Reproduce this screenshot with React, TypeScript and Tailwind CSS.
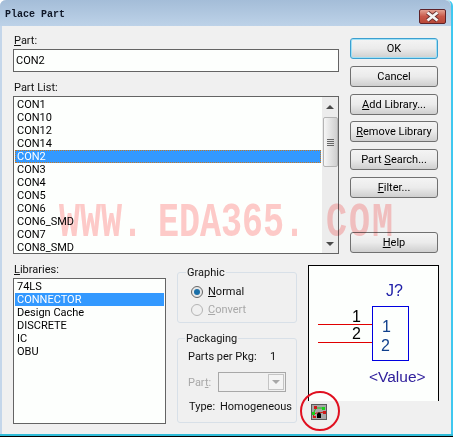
import type { ReactNode } from 'react'

const parts = ['CON1', 'CON10', 'CON12', 'CON14', 'CON2', 'CON3', 'CON4', 'CON5', 'CON6', 'CON6_SMD', 'CON7', 'CON8_SMD']
const libraries = ['74LS', 'CONNECTOR', 'Design Cache', 'DISCRETE', 'IC', 'OBU']

function Btn({ label, u, className = '', primary = false }: { label: string; u?: string; className?: string; primary?: boolean }) {
  const i = u ? label.indexOf(u) : -1
  return (
    <div
      className={`flex h-[21px] w-[88px] items-center justify-center rounded-[3px] border bg-gradient-to-b from-[#f4f4f4] via-[#ebebeb] to-[#cfcfcf] text-black ${
        primary ? 'border-[#3c9fd0] shadow-[inset_0_0_0_1px_#9fe0f5]' : 'border-[#707070]'
      } ${className}`}
    >
      {i >= 0 ? (
        <span>
          {label.slice(0, i)}
          <span className="underline">{u}</span>
          {label.slice(i + 1)}
        </span>
      ) : (
        label
      )}
    </div>
  )
}

function ListBox({ items, selected, focus, className, children }: { items: string[]; selected: string; focus?: boolean; className: string; children?: ReactNode }) {
  return (
    <div className={`flex overflow-hidden border border-[#646464] bg-[#fdfffd] ${className}`}>
      <div className="min-w-0 flex-1 p-px">
        {items.map((it) => (
          <div
            key={it}
            className={`h-[13px] pl-[2px] leading-[13px] ${
              it === selected ? 'bg-[#3399ff] text-white' : 'text-black'
            } ${it === selected && focus ? 'outline-1 -outline-offset-1 outline-dotted outline-[#c87820]' : ''}`}
          >
            {it}
          </div>
        ))}
      </div>
      {children}
    </div>
  )
}

function ScrollBar() {
  return (
    <div className="flex w-[16px] flex-col items-center bg-[#ececec]">
      <div className="flex h-[20px] items-center justify-center">
        <div className="h-0 w-0 border-x-[4px] border-b-[4px] border-x-transparent border-b-[#4a4a4a]" />
      </div>
      <div className="flex h-[50px] w-[15px] flex-col items-center justify-center gap-px rounded-[2px] border border-[#b4b4b4] bg-gradient-to-r from-[#f6f6f6] to-[#cfcfcf]">
        <div className="h-px w-[7px] bg-[#666]" />
        <div className="h-px w-[7px] bg-[#666]" />
        <div className="h-px w-[7px] bg-[#666]" />
        <div className="h-px w-[7px] bg-[#666]" />
      </div>
      <div className="flex-1" />
      <div className="flex h-[18px] items-center justify-center">
        <div className="h-0 w-0 border-x-[4px] border-t-[4px] border-x-transparent border-t-[#4a4a4a]" />
      </div>
    </div>
  )
}

function Radio({ checked, disabled }: { checked?: boolean; disabled?: boolean }) {
  return (
    <div className={`flex h-[12px] w-[12px] items-center justify-center rounded-full border ${disabled ? 'border-[#b4b4b4] bg-[#f0f0f0]' : 'border-[#666] bg-[#e8e8e8]'}`}>
      {checked && <div className="h-[6px] w-[6px] rounded-full bg-[#1a6fa8]" />}
    </div>
  )
}

function Schematic() {
  return (
    <svg width="129" height="135" viewBox="0 0 129 135" className="block">
      <g fontFamily="'Liberation Sans', sans-serif" fontSize="16">
        <line x1="9" y1="58.5" x2="63" y2="58.5" stroke="#e00000" />
        <line x1="9" y1="76.5" x2="63" y2="76.5" stroke="#e00000" />
        <rect x="63.5" y="40.5" width="36" height="54" fill="none" stroke="#0000e0" />
        <text x="43" y="56" fill="#000">1</text>
        <text x="43" y="73" fill="#000">2</text>
        <text x="73" y="66" fill="#10408c">1</text>
        <text x="72" y="85" fill="#10408c">2</text>
        <text x="77" y="30" fill="#2020a8">J?</text>
        <text x="60" y="116" fill="#30209c" fontSize="15.5">&lt;Value&gt;</text>
      </g>
    </svg>
  )
}

function PartIcon() {
  return (
    <svg width="16" height="16" viewBox="0 0 16 16" className="block">
      <rect x="0.5" y="0.5" width="15" height="15" fill="#a8a8a8" stroke="#5a5a5a" />
      <path d="M2 10 L5 4 L12 4" fill="none" stroke="#18c018" />
      <path d="M2 12 L5 9 L8 9 L13 8" fill="none" stroke="#d01818" />
      <rect x="3" y="2" width="3" height="3" fill="#d01818" />
      <rect x="11" y="3" width="3" height="3" fill="#18d018" />
      <rect x="1" y="8" width="3" height="3" fill="#18d018" />
      <rect x="2" y="12" width="3" height="2" fill="#d01818" />
      <rect x="12" y="7" width="3" height="3" fill="#d01818" />
      <path d="M6 14 V10 L8 8 L10 10 V14 Z" fill="#000" />
    </svg>
  )
}

function CloseGlyph() {
  return (
    <svg width="15" height="11" viewBox="0 0 15 11" className="block">
      <path d="M2.5 1.5 L12.5 9.5 M12.5 1.5 L2.5 9.5" stroke="#6a3030" strokeWidth="4.5" />
      <path d="M2.5 1.5 L12.5 9.5 M12.5 1.5 L2.5 9.5" stroke="#f4f4f4" strokeWidth="2.8" />
    </svg>
  )
}

export default function App() {
  return (
    <div className="relative h-[438px] w-[453px] overflow-hidden bg-white font-['Roboto',sans-serif] text-[11px] leading-[15px]">
      <div className="flex h-[434px] flex-col rounded-t-[6px] border-r-2 border-l-2 border-r-[#40c8f0] border-l-[#c4d6ea] bg-[#f0f0f0]">
        <div className="-ml-[2px] flex h-[26px] items-start justify-between rounded-t-[6px] bg-gradient-to-b from-[#a4bdd8] to-[#bdd2e8] pl-[5px] pr-[5px]">
          <span className="mt-[7px] font-['Liberation_Mono',monospace] text-[10px] font-bold text-[#101828]">Place Part</span>
          <div className="mt-[9px] flex h-[15px] w-[27px] items-center justify-center rounded-[2px] border border-[#5e2228] bg-gradient-to-b from-[#e2a294] via-[#c8584a] to-[#b84838]">
            <CloseGlyph />
          </div>
        </div>

        <div className="flex pl-[11px]">
          <div className="w-[326px]">
            <div className="mt-[7px] mb-px h-[15px] pl-px text-[#111]"><span className="underline">P</span>art:</div>
            <div className="flex h-[23px] items-center border border-[#646464] bg-[#fdfffd] pl-[2px]">CON2</div>
            <div className="mt-[8px] mb-px h-[15px] pl-px text-[#111]">Part List:</div>
            <ListBox items={parts} selected="CON2" focus className="h-[158px]">
              <ScrollBar />
            </ListBox>
          </div>
          <div className="ml-[11px] pt-[12px]">
            <Btn label="OK" primary />
            <Btn label="Cancel" className="mt-[7px]" />
            <Btn label="Add Library..." u="A" className="mt-[7px]" />
            <Btn label="Remove Library" u="R" className="mt-[6px]" />
            <Btn label="Part Search..." u="S" className="mt-[7px]" />
            <Btn label="Filter..." u="F" className="mt-[7px]" />
            <Btn label="Help" u="H" className="mt-[34px]" />
          </div>
        </div>

        <div className="flex pl-[11px]">
          <div className="w-[153px] pt-[8px]">
            <div className="mb-px h-[15px] pl-px text-[#111]"><span className="underline">L</span>ibraries:</div>
            <ListBox items={libraries} selected="CONNECTOR" className="h-[146px]" />
          </div>

          <div className="ml-[11px] w-[120px] pt-[11px]">
            <fieldset className="h-[58px] rounded-[3px] border border-[#d8e0e8] pl-[13px]">
              <legend className="-ml-[5px] px-px text-[#111]">Graphic</legend>
              <div className="mt-[4px] flex items-center gap-[5px]">
                <Radio checked />
                <span className="text-[#111]"><span className="underline">N</span>ormal</span>
              </div>
              <div className="mt-[3px] flex items-center gap-[5px] text-[#a8a8a8]">
                <Radio disabled />
                <span><span className="underline">C</span>onvert</span>
              </div>
            </fieldset>
            <fieldset className="mt-[8px] h-[92px] rounded-[3px] border border-[#d8e0e8] pl-[10px] text-[#111]">
              <legend className="-ml-[3px] px-px">Packaging</legend>
              <div className="mt-[3px] flex">
                <span className="w-[82px]">Parts per Pkg:</span>
                <span>1</span>
              </div>
              <div className="mt-[8px] flex items-center text-[#a8a8a8]">
                <span className="w-[30px]">Par<span className="underline">t</span>:</span>
                <div className="flex h-[20px] w-[68px] justify-end border border-[#a8a8a8] bg-[#f0f0f0] p-px">
                  <div className="flex w-[16px] items-center justify-center border border-[#c4c4c4] bg-[#f4f4f4]">
                    <div className="h-0 w-0 border-x-[4px] border-t-[4px] border-x-transparent border-t-[#a8a8a8]" />
                  </div>
                </div>
              </div>
              <div className="mt-[7px] flex pl-px">
                <span className="w-[31px]">Type:</span>
                <span>Homogeneous</span>
              </div>
            </fieldset>
          </div>

          <div className="ml-[11px] w-[131px] pt-[11px]">
            <div className="h-[136px] border-x border-t border-black bg-[#fdfffd]">
              <Schematic />
            </div>
            <div className="mt-[3px] ml-[3px]">
              <PartIcon />
            </div>
          </div>
        </div>
      </div>
      <div className="h-[2px] bg-[#30bcd8]" />
      <div className="h-px bg-black" />

      <div className="pointer-events-none absolute left-[59px] top-[200px] origin-center scale-y-[1.4] whitespace-pre font-['Liberation_Mono',monospace] text-[35px] font-bold leading-[46px] text-[#ffcaca] mix-blend-multiply">
        <span className="[word-spacing:-6px]">WWW. </span>EDA365. <span className="tracking-[2px]">COM</span>
      </div>
      <div className="pointer-events-none absolute left-[300px] top-[391px] h-[40px] w-[40px] rounded-full border-2 border-[#e01020]" />
    </div>
  )
}
